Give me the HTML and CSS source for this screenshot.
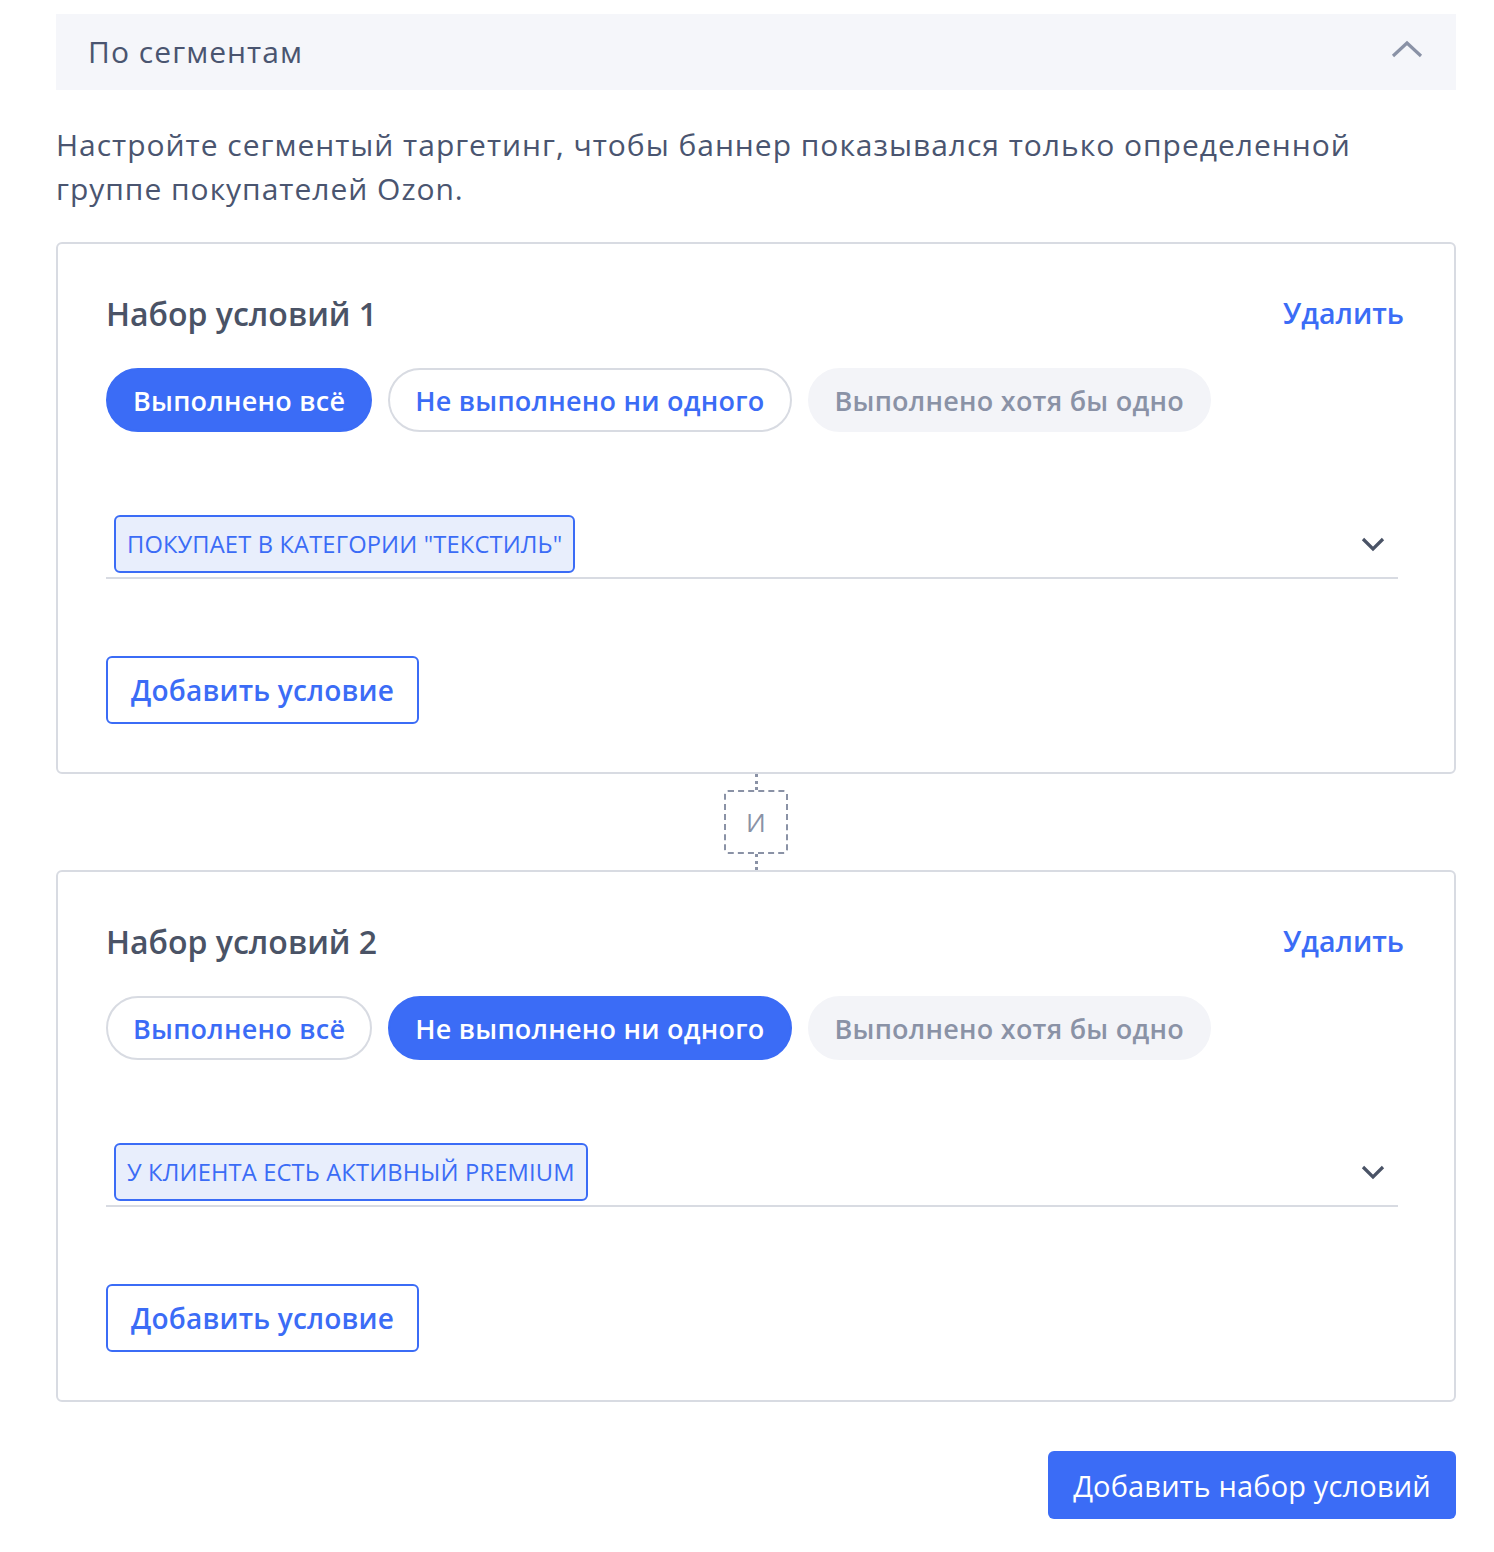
FILE: index.html
```html
<!DOCTYPE html>
<html lang="ru">
<head>
<meta charset="utf-8">
<link rel="stylesheet" href="styles.css">
</head>
<body>
<div class="page">
  <div class="section-head">
    <span class="section-title">По сегментам</span>
    <svg class="chev-up" width="32" height="18" viewBox="0 0 32 18"><path d="M2 16 L16 3 L30 16" fill="none" stroke="#8a92a6" stroke-width="3.2"/></svg>
  </div>
  <p class="intro">Настройте сегментый таргетинг, чтобы баннер показывался только определенной группе покупателей Ozon.</p>

  <div class="card">
    <div class="card-head">
      <span class="card-title">Набор условий 1</span>
      <span class="link">Удалить</span>
    </div>
    <div class="pills">
      <span class="pill pill-active">Выполнено всё</span>
      <span class="pill pill-outline">Не выполнено ни одного</span>
      <span class="pill pill-muted">Выполнено хотя бы одно</span>
    </div>
    <div class="select">
      <span class="tag">ПОКУПАЕТ В КАТЕГОРИИ "ТЕКСТИЛЬ"</span>
      <svg class="chev-down" width="24" height="16" viewBox="0 0 24 16"><path d="M2 3 L12 13 L22 3" fill="none" stroke="#4a5366" stroke-width="3.2"/></svg>
    </div>
    <button class="btn-outline">Добавить условие</button>
  </div>

  <div class="connector">
    <div class="dots"></div>
    <div class="and">И</div>
    <div class="dots"></div>
  </div>

  <div class="card">
    <div class="card-head">
      <span class="card-title">Набор условий 2</span>
      <span class="link">Удалить</span>
    </div>
    <div class="pills">
      <span class="pill pill-outline">Выполнено всё</span>
      <span class="pill pill-active">Не выполнено ни одного</span>
      <span class="pill pill-muted">Выполнено хотя бы одно</span>
    </div>
    <div class="select">
      <span class="tag">У КЛИЕНТА ЕСТЬ АКТИВНЫЙ PREMIUM</span>
      <svg class="chev-down" width="24" height="16" viewBox="0 0 24 16"><path d="M2 3 L12 13 L22 3" fill="none" stroke="#4a5366" stroke-width="3.2"/></svg>
    </div>
    <button class="btn-outline">Добавить условие</button>
  </div>

  <div class="footer">
    <button class="btn-primary">Добавить набор условий</button>
  </div>
</div>
</body>
</html>
```
FILE: styles.css
```css
* { box-sizing: border-box; }
html, body { margin: 0; padding: 0; background: #fff; }
body {
  font-family: "Open Sans", "Noto Sans", sans-serif;
  color: #4a5366;
}
.page {
  width: 1400px;
  margin: 14px 0 0 56px;
}
.section-head {
  height: 76px;
  background: #f5f6fa;
  display: flex;
  align-items: center;
  justify-content: space-between;
  padding: 0 33px 0 32px;
}
.section-title {
  font-size: 30px;
  color: #4a5570;
  letter-spacing: 1.05px;
  margin-top: -2px;
}
.chev-up { margin-top: -6px; }
.intro {
  margin: 33px 0 31px 0;
  font-size: 30px;
  line-height: 44px;
  color: #4a5570;
  letter-spacing: 0.98px;
}
.card {
  border: 2px solid #d8dbe2;
  border-radius: 6px;
  padding: 48px 48px 48px 48px;
}
.card-head {
  display: flex;
  justify-content: space-between;
  align-items: center;
  height: 44px;
}
.card-title {
  font-size: 32px;
  font-weight: 600;
  color: #4a5366;
  margin-left: 0;
  margin-top: -2px;
}
.link {
  font-size: 28.5px;
  font-weight: 600;
  color: #3b6cf6;
  margin-right: 2px;
  margin-top: -2px;
}
.pills {
  display: flex;
  gap: 16px;
  margin-top: 32px;
}
.pill {
  height: 64px;
  border-radius: 32px;
  border: 2px solid transparent;
  padding: 0 25px;
  display: flex;
  align-items: center;
  font-size: 27px;
  font-weight: 600;
  letter-spacing: 0.25px;
}
.pill-active { background: #3b6cf6; border-color: #3b6cf6; color: #fff; }
.pill-outline { background: #fff; border-color: #d8dbe2; color: #3b6cf6; }
.pill-muted { background: #f3f4f8; border-color: #f3f4f8; color: #8a92a6; }
.select {
  margin-top: 76px;
  margin-right: 8px;
  display: flex;
  align-items: center;
  justify-content: space-between;
  padding: 7px 13px 4px 8px;
  border-bottom: 2px solid #d8dbe2;
}
.tag {
  height: 58px;
  display: flex;
  align-items: center;
  padding: 0 11px;
  background: #e8eefc;
  border: 2px solid #3b6cf6;
  border-radius: 6px;
  color: #3b6cf6;
  font-size: 23.7px;
  letter-spacing: 0.15px;
}
.btn-outline {
  margin-top: 77px;
  height: 68px;
  padding: 0 23px;
  background: #fff;
  border: 2px solid #3b6cf6;
  border-radius: 6px;
  color: #3b6cf6;
  font-family: inherit;
  font-size: 28px;
  font-weight: 600;
  letter-spacing: 0.2px;
  display: block;
}
.connector {
  display: flex;
  flex-direction: column;
  align-items: center;
}
.dots {
  width: 0;
  height: 16px;
  border-left: 3px dotted #8a92a6;
}
.and {
  width: 64px;
  height: 64px;
  border: 2px dashed #8a92a6;
  border-radius: 4px;
  display: flex;
  align-items: center;
  justify-content: center;
  font-size: 26px;
  color: #8a92a6;
}
.footer {
  display: flex;
  justify-content: flex-end;
  margin-top: 49px;
}
.btn-primary {
  height: 68px;
  width: 408px;
  background: #3b6cf6;
  color: #fff;
  border: none;
  border-radius: 6px;
  font-family: inherit;
  font-size: 29px;
  letter-spacing: 0.15px;
}
```
